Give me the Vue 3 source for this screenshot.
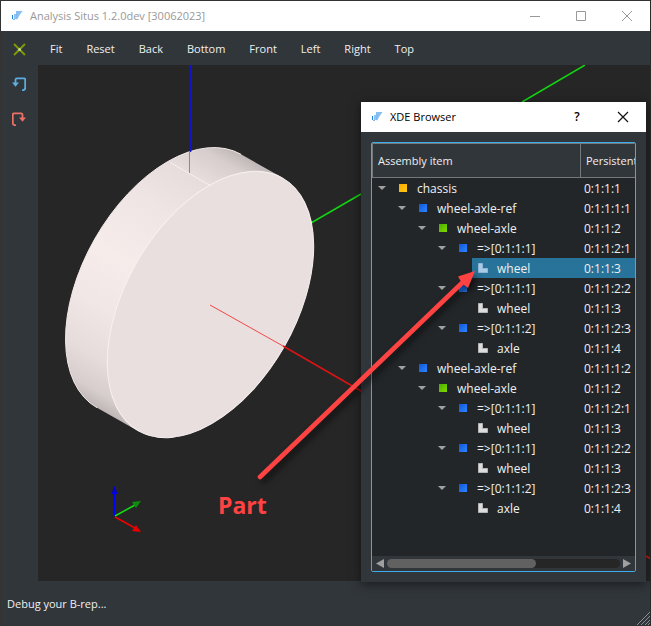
<script setup>
import { ref } from 'vue'

const views = ['Fit', 'Reset', 'Back', 'Bottom', 'Front', 'Left', 'Right', 'Top']
const selected = ref(4)

const rows = [
  { level: 0, icon: 'root', name: 'chassis', id: '0:1:1:1' },
  { level: 1, icon: 'ref', name: 'wheel-axle-ref', id: '0:1:1:1:1' },
  { level: 2, icon: 'assembly', name: 'wheel-axle', id: '0:1:1:2' },
  { level: 3, icon: 'ref', name: '=>[0:1:1:1]', id: '0:1:1:2:1' },
  { level: 4, icon: 'part', name: 'wheel', id: '0:1:1:3' },
  { level: 3, icon: 'ref', name: '=>[0:1:1:1]', id: '0:1:1:2:2' },
  { level: 4, icon: 'part', name: 'wheel', id: '0:1:1:3' },
  { level: 3, icon: 'ref', name: '=>[0:1:1:2]', id: '0:1:1:2:3' },
  { level: 4, icon: 'part', name: 'axle', id: '0:1:1:4' },
  { level: 1, icon: 'ref', name: 'wheel-axle-ref', id: '0:1:1:1:2' },
  { level: 2, icon: 'assembly', name: 'wheel-axle', id: '0:1:1:2' },
  { level: 3, icon: 'ref', name: '=>[0:1:1:1]', id: '0:1:1:2:1' },
  { level: 4, icon: 'part', name: 'wheel', id: '0:1:1:3' },
  { level: 3, icon: 'ref', name: '=>[0:1:1:1]', id: '0:1:1:2:2' },
  { level: 4, icon: 'part', name: 'wheel', id: '0:1:1:3' },
  { level: 3, icon: 'ref', name: '=>[0:1:1:2]', id: '0:1:1:2:3' },
  { level: 4, icon: 'part', name: 'axle', id: '0:1:1:4' }
]
</script>

<template>
  <div class="window">
    <header class="titlebar">
      <svg class="logo" width="12" height="12" viewBox="0 0 12 12">
        <path d="M5 1H11.500L8 6L6 10L5 6Z" fill="#86bff2" />
        <path d="M1.500 5V9M4 4V9" stroke="#1f86e0" />
        <path d="M2 9.500H4M5.500 4V9" stroke="#7fb8ee" />
      </svg>
      <span class="title">Analysis Situs 1.2.0dev [30062023]</span>
      <button class="caption" aria-label="Minimize">
        <svg width="12" height="12" viewBox="0 0 12 12"><path d="M1 6.500H11" stroke="#999" /></svg>
      </button>
      <button class="caption" aria-label="Maximize">
        <svg width="12" height="12" viewBox="0 0 12 12"><path d="M1.500 1.500H10.500V10.500H1.500Z" fill="none" stroke="#999" /></svg>
      </button>
      <button class="caption" aria-label="Close">
        <svg width="12" height="12" viewBox="0 0 12 12"><path d="M1 1L11 11M11 1L1 11" stroke="#999" /></svg>
      </button>
    </header>

    <div class="workspace">
      <nav class="tools">
        <button class="tool" aria-label="Clear">
          <svg width="14" height="14" viewBox="0 0 14 14">
            <path d="M2 2L13 13M13 2L2 13" stroke="#7a9a08" stroke-width="2" />
            <circle cx="7.500" cy="7.500" r="1.500" fill="#c4dc8c" />
          </svg>
        </button>
        <button class="tool" aria-label="Undo">
          <svg width="14" height="14" viewBox="0 0 14 14" fill="none">
            <path d="M10 13.300C12 13.300 13.200 12.500 13.200 11V2.500Q13.200 1.300 12 1.300H5Q3.500 1.300 3.500 3V8" stroke="#5dade2" stroke-width="1.800" />
            <path d="M0 5.500H7L3.500 9.800Z" fill="#5dade2" />
          </svg>
        </button>
        <button class="tool" aria-label="Redo">
          <svg width="14" height="14" viewBox="0 0 14 14" fill="none">
            <path d="M4 13.300C2 13.300 0.800 12.500 0.800 11V2.500Q0.800 1.300 2 1.300H9Q10.500 1.300 10.500 3V8" stroke="#ec7063" stroke-width="1.800" />
            <path d="M7 5.500H14L10.500 9.800Z" fill="#ec7063" />
          </svg>
        </button>
      </nav>

      <div class="main">
        <div class="views">
          <button v-for="view in views" :key="view" class="view">{{ view }}</button>
        </div>
        <div class="canvas">
          <svg class="scene" width="613" height="516" viewBox="38 65 613 516">
            <defs>
              <linearGradient id="side" gradientUnits="userSpaceOnUse" x1="97" y1="408" x2="241" y2="154">
                <stop offset="0" stop-color="#bfb7b7" />
                <stop offset="0.050" stop-color="#d6cdcc" />
                <stop offset="0.150" stop-color="#e5dcdb" />
                <stop offset="0.300" stop-color="#f0e6e5" />
                <stop offset="0.480" stop-color="#f6ecea" />
                <stop offset="0.700" stop-color="#efe5e4" />
                <stop offset="0.860" stop-color="#e5dcdb" />
                <stop offset="0.950" stop-color="#d6cdcc" />
                <stop offset="1" stop-color="#bfb7b7" />
              </linearGradient>
            </defs>
            <path d="M311 223L361 194M522 102L585 65" stroke="#13d313" stroke-width="1.500" />
            <path d="M97 407.700A145.500 85.200 -60.300 0 1 241 154.300L282.600 177.800L138.500 431.200Z" fill="url(#side)" />
            <path d="M97 407.700A145.500 85.200 -60.300 0 1 241 154.300" fill="none" stroke="#f2e9e8" />
            <ellipse cx="210.500" cy="304.500" rx="145.500" ry="85" transform="rotate(-60.300 210.500 304.500)" fill="#e8dfde" stroke="#f8f1f0" />
            <path d="M170 162.500L211 186" stroke="#f8f1f0" />
            <path d="M190.500 65V152" stroke="#1414c8" stroke-width="1.500" />
            <path d="M189.500 152V173" stroke="#7f7fe6" />
            <path d="M210 305L283 346" stroke="#f34848" />
            <path d="M283 346L361 391M646 556L651 559" stroke="#dc1414" stroke-width="1.500" />
            <path d="M114.500 516V492" stroke="#00f" stroke-width="1.500" />
            <path d="M114.500 486L111.500 494H117.500Z" fill="#0000e0" />
            <path d="M115 516L135 505" stroke="#12dc12" stroke-width="1.500" />
            <path d="M141 501L132 502L136 508Z" fill="#0c8f0c" />
            <path d="M115 517L135 528" stroke="#f00000" stroke-width="1.500" />
            <path d="M141 532L136 525L132 531Z" fill="#e80000" />
          </svg>
        </div>
      </div>
    </div>

    <footer class="status">
      <span>Debug your B-rep...</span>
      <svg class="grip" width="13" height="13" viewBox="0 0 13 13">
        <path d="M0 13L13 0M4 13L13 4M8 13L13 8M11 13L13 11" stroke="#8a8d8f" />
      </svg>
    </footer>

    <section class="dialog" role="dialog" aria-label="XDE Browser">
      <header class="dialog-title">
        <svg class="logo" width="12" height="12" viewBox="0 0 12 12">
          <path d="M5 1H11.500L8 6L6 10L5 6Z" fill="#86bff2" />
          <path d="M1.500 5V9M4 4V9" stroke="#1f86e0" />
          <path d="M2 9.500H4M5.500 4V9" stroke="#7fb8ee" />
        </svg>
        <span class="title">XDE Browser</span>
        <button class="caption help" aria-label="Help">?</button>
        <button class="caption" aria-label="Close">
          <svg width="12" height="12" viewBox="0 0 12 12"><path d="M1 1L11 11M11 1L1 11" stroke="#111" stroke-width="1.200" /></svg>
        </button>
      </header>
      <div class="browser">
        <table>
          <colgroup>
            <col class="col-item" />
            <col />
          </colgroup>
          <thead>
            <tr><th>Assembly item</th><th>Persistent</th></tr>
          </thead>
          <tbody>
            <tr v-for="(row, i) in rows" :key="i" :class="{ selected: i === selected }" @click="selected = i">
              <td>
                <div class="item" :style="{ paddingLeft: row.level * 20 + 'px' }">
                  <span class="branch">
                    <button v-if="row.icon !== 'part'" class="toggle" aria-label="Collapse">
                      <svg width="8" height="4" viewBox="0 0 8 4"><path d="M0 0H8L4 4Z" fill="#a0a0a0" /></svg>
                    </button>
                  </span>
                  <span class="label">
                    <span class="icon">
                      <svg v-if="row.icon === 'part'" width="10" height="10" viewBox="0 0 10 10">
                        <path d="M0.500 0.500H4.500V5.500H9.500V9.500H0.500Z" :fill="i === selected ? '#a9cbe6' : '#dcdcdc'" :stroke="i === selected ? '#8fb6d6' : '#b4b4b4'" />
                      </svg>
                      <i v-else class="square" :class="row.icon"></i>
                    </span>
                    <span class="name">{{ row.name }}</span>
                  </span>
                </div>
              </td>
              <td class="id">{{ row.id }}</td>
            </tr>
          </tbody>
        </table>
        <div class="scroll">
          <button class="step" aria-label="Scroll left">
            <svg width="8" height="9" viewBox="0 0 8 9"><path d="M8 0V9L0 4.500Z" fill="#a0a0a0" /></svg>
          </button>
          <div class="track"><div class="thumb"></div></div>
          <button class="step" aria-label="Scroll right">
            <svg width="8" height="9" viewBox="0 0 8 9"><path d="M0 0V9L8 4.500Z" fill="#a0a0a0" /></svg>
          </button>
        </div>
      </div>
    </section>

    <svg class="pointer" width="240" height="230" viewBox="250 260 240 230">
      <path d="M260 477L464 281" stroke="#ff4343" stroke-width="4.600" stroke-linecap="round" />
      <path d="M475 271L468 288L463.500 284.500L461 281.500L458 276.500Z" fill="#ff4343" />
    </svg>
    <strong class="callout">Part</strong>
  </div>
</template>

<style>
body {
  margin: 0;
  background: #31363b;
}
</style>

<style scoped>
.window {
  position: relative;
  display: flex;
  flex-direction: column;
  box-sizing: border-box;
  min-height: 100vh;
  border: 1px solid #333;
  border-right-color: #2a2a2a;
  background: #31363b;
  color: #eff0f1;
  font: 11px/20px "Open Sans", "Noto Sans", sans-serif;
}
button {
  display: flex;
  align-items: center;
  justify-content: center;
  margin: 0;
  padding: 0;
  border: 0;
  background: none;
  color: inherit;
  font: inherit;
}
svg {
  display: block;
}
.titlebar,
.dialog-title {
  display: flex;
  align-items: center;
  height: 30px;
  padding-left: 10px;
  background: #fff;
}
.titlebar {
  color: #999;
}
.dialog-title {
  color: #000;
}
.title {
  flex: 1;
  padding-left: 7px;
}
.caption {
  width: 46px;
  height: 30px;
}
.help {
  font-size: 12px;
  font-weight: 600;
}
.workspace {
  display: flex;
  flex: 1;
}
.tools {
  display: flex;
  flex-direction: column;
  width: 37px;
}
.tool {
  width: 36px;
  height: 35px;
}
.main {
  display: flex;
  flex: 1;
  flex-direction: column;
  min-width: 0;
}
.views {
  display: flex;
  align-items: center;
  gap: 24px;
  box-sizing: border-box;
  height: 34px;
  padding: 2px 0 0 12px;
}
.canvas {
  position: relative;
  flex: 1;
  overflow: hidden;
  background: #262626;
}
.scene {
  position: absolute;
  top: 0;
  left: 0;
}
.status {
  display: flex;
  align-items: center;
  justify-content: space-between;
  box-sizing: border-box;
  height: 44px;
  padding: 2px 0 0 6px;
}
.grip {
  align-self: flex-end;
}
.dialog {
  position: absolute;
  top: 101px;
  right: 4px;
  bottom: 43px;
  left: 360px;
  display: flex;
  flex-direction: column;
  background: #31363b;
  box-shadow: 0 2px 10px rgba(0, 0, 0, 0.5);
}
.browser {
  display: flex;
  flex: 1;
  flex-direction: column;
  justify-content: space-between;
  margin: 10px;
  overflow: hidden;
  border: 1px solid #3daee9;
  border-radius: 2px;
  background: #232629;
}
table {
  width: 100%;
  table-layout: fixed;
  border-spacing: 0;
}
.col-item {
  width: 208px;
}
th {
  height: 33px;
  padding: 0 0 0 5px;
  border: 1px solid #76797c;
  border-right-width: 0;
  background: #31363b;
  font-weight: 400;
  text-align: left;
}
td {
  height: 20px;
  padding: 0;
  font-size: 12px;
  line-height: 18px;
}
.item {
  display: flex;
  height: 20px;
}
.branch {
  display: flex;
  align-items: center;
  justify-content: center;
  width: 20px;
}
.toggle {
  width: 20px;
  height: 20px;
}
.label {
  display: flex;
  flex: 1;
  align-items: center;
  gap: 3px;
}
.icon {
  display: flex;
  justify-content: center;
  width: 22px;
}
.square {
  width: 8px;
  height: 8px;
}
.root {
  background: linear-gradient(135deg, #ffa800, #ffcc10);
}
.ref {
  background: linear-gradient(135deg, #0d57d8, #2f86ff);
}
.assembly {
  background: linear-gradient(135deg, #45b000, #86d800);
}
.name {
  padding-top: 2px;
}
.id {
  box-sizing: border-box;
  padding: 2px 0 0 4px;
}
.selected .label,
.selected .id {
  background: #287399;
}
.scroll {
  display: flex;
  align-items: center;
  gap: 3px;
  height: 15px;
  padding: 0 4px;
  background: #31363b;
}
.track {
  flex: 1;
  height: 9px;
  border-radius: 5px;
  background: #262626;
}
.thumb {
  width: 64%;
  height: 9px;
  border-radius: 5px;
  background: #616161;
}
.pointer {
  position: absolute;
  top: 259px;
  left: 249px;
  filter: drop-shadow(3px 4px 3px rgba(0, 0, 0, 0.6));
  pointer-events: none;
}
.callout {
  position: absolute;
  top: 489px;
  left: 217px;
  color: #ff4343;
  font: 700 23px/30px "Open Sans", "Noto Sans", sans-serif;
}
</style>
